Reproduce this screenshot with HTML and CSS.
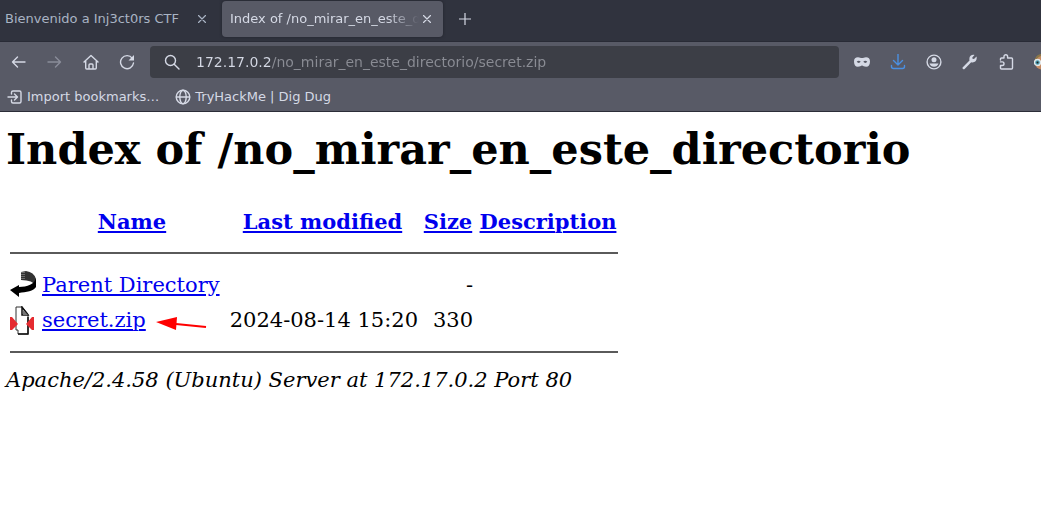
FILE: index.html
```html
<!DOCTYPE html>
<html lang="en">
<head>
<meta charset="utf-8">
<meta name="viewport" content="width=device-width, initial-scale=1">
<title>Index of /no_mirar_en_este_directorio</title>
<link rel="stylesheet" href="styles.css">
</head>
<body>
<header class="browser">
  <div class="tabs">
    <div class="tab">
      <button class="tab-title" type="button">Bienvenido a Inj3ct0rs CTF</button>
      <button class="tab-close" type="button" aria-label="Close tab"><svg width="8" height="8" viewBox="0 0 8 8"><path d="M.5.5l7 7M7.5.5l-7 7"/></svg></button>
    </div>
    <div class="tab tab-active">
      <button class="tab-title tab-fade" type="button">Index of /no_mirar_en_este_d</button>
      <button class="tab-close" type="button" aria-label="Close tab"><svg width="8" height="8" viewBox="0 0 8 8"><path d="M.5.5l7 7M7.5.5l-7 7"/></svg></button>
    </div>
    <button class="tab-new" type="button" aria-label="New tab"><svg width="12" height="12" viewBox="0 0 12 12"><path d="M6 0v12M0 6h12"/></svg></button>
  </div>
  <div class="toolbar">
    <div class="nav">
      <button class="tool" type="button" aria-label="Back"><svg width="16" height="16" viewBox="0 0 16 16"><path d="M14 8H1.500M6.500 3L1.500 8l5 5"/></svg></button>
      <button class="tool tool-off" type="button" aria-label="Forward" disabled><svg width="16" height="16" viewBox="0 0 16 16"><path d="M1 8h12.500M8.500 3L13.500 8l-5 5"/></svg></button>
      <button class="tool" type="button" aria-label="Home"><svg width="16" height="16" viewBox="0 0 16 16"><path d="M1 8l7-6.500L15 8M2.700 7v7q0 1 1 1h8.600q1 0 1-1V7M6 15v-4q0-1 1-1h2q1 0 1 1v4"/></svg></button>
      <button class="tool" type="button" aria-label="Reload"><svg width="16" height="16" viewBox="0 0 16 16"><path d="M13.300 4.300A6.500 6.500 0 1 0 14.500 9"/><path class="solid" d="M15 1v5.500H9.500z"/></svg></button>
    </div>
    <label class="url">
      <svg width="16" height="16" viewBox="0 0 16 16"><circle cx="6.500" cy="6.500" r="5"/><path d="M10.200 10.200L15 15"/></svg>
      <input class="url-text" type="text" aria-label="Address" value="172.17.0.2/no_mirar_en_este_directorio/secret.zip">
    </label>
    <div class="actions">
      <button class="tool" type="button" aria-label="Private mask"><svg width="16" height="16" viewBox="0 0 16 16"><path class="solid" fill-rule="evenodd" d="M0 7.500C0 4.500 1.500 3.200 4 3.200c2 0 2.500.8 4 .8s2-.8 4-.8c2.500 0 4 1.300 4 4.300 0 3.500-1.500 5.300-3.800 5.300C10 12.800 9 11.500 8 11.500s-2 1.300-4.200 1.300C1.500 12.800 0 11 0 7.500zM2.700 7.800c1 1.500 3 1.500 4 0-1-1.500-3-1.500-4 0zm6.600 0c1 1.500 3 1.500 4 0-1-1.500-3-1.500-4 0z"/></svg></button>
      <button class="tool tool-blue" type="button" aria-label="Downloads"><svg width="16" height="16" viewBox="0 0 16 16"><path d="M8 0v11M3.500 6.500L8 11l4.500-4.500M1.500 11.500v1q0 2 2 2h9q2 0 2-2v-1"/></svg></button>
      <button class="tool" type="button" aria-label="Account"><svg width="16" height="16" viewBox="0 0 16 16"><circle cx="8" cy="8" r="6.900"/><circle class="solid" cx="8" cy="5.700" r="2.500"/><path class="solid" d="M3.500 9.500h9c-.5 2-2.500 3.300-4.500 3.300s-4-1.300-4.500-3.300z"/></svg></button>
      <button class="tool" type="button" aria-label="Developer tools"><svg width="16" height="16" viewBox="0 0 16 16"><path class="solid" d="M14.500 2.500L12 5 10.500 4.800 10.300 3.500 12.500 1C10 .3 6.500 2 7.500 6.500L.8 13.200c-1 1 .8 2.800 1.800 1.800L9.200 8.300C13 9.300 15.500 6 14.500 2.500z"/></svg></button>
      <button class="tool" type="button" aria-label="Extensions"><svg width="16" height="16" viewBox="0 0 16 16"><path d="M2.500 6V5q0-1 1-1H6V2.500a1.800 1.800 0 0 1 3.600 0V4h3.900q1 0 1 1v9q0 1-1 1h-10q-1 0-1-1v-2.500h1.700a1.800 1.800 0 0 0 0-3.600H2.500"/></svg></button>
      <button class="tool" type="button" aria-label="Profile extension"><svg width="16" height="16" viewBox="0 0 16 16"><circle cx="8" cy="8" r="7.500" fill="#c58a62" stroke="none"/><path d="M2 5Q4 1 8 1" stroke="#8b7748" stroke-width="2"/><circle cx="3.500" cy="8.500" r="3" fill="#4b9eb2" stroke="#e4eaec"/><circle cx="3.500" cy="8.500" r="1" fill="#222" stroke="none"/></svg></button>
    </div>
  </div>
  <nav class="bookmarks" aria-label="Bookmarks">
    <a class="bookmark" href="#import"><svg width="16" height="16" viewBox="0 0 16 16"><path d="M4.500 5V3.500q0-1.500 1.500-1.500h6.500q1.500 0 1.500 1.500v9q0 1.500-1.500 1.500H6q-1.500 0-1.500-1.500V11M1 8h9M7.500 5L10.500 8l-3 3"/></svg><span>Import bookmarks…</span></a>
    <a class="bookmark" href="#thm"><svg width="16" height="16" viewBox="0 0 16 16"><circle cx="8" cy="8" r="6.800"/><ellipse cx="8" cy="8" rx="3.200" ry="6.800"/><path d="M1.500 8h13"/></svg><span>TryHackMe | Dig Dug</span></a>
  </nav>
</header>
<main class="page">
  <h1 class="title">Index of /no_mirar_en_este_directorio</h1>
  <table class="listing">
    <colgroup><col class="c-icon"><col class="c-name"><col class="c-date"><col class="c-size"><col class="c-desc"></colgroup>
    <tr class="row"><td></td><th><a href="#name">Name</a></th><th><a href="#modified">Last modified</a></th><th><a href="#size">Size</a></th><th><a href="#description">Description</a></th></tr>
    <tr><td colspan="5"><hr></td></tr>
    <tr class="row">
      <td><svg class="file-icon" width="27" height="29" viewBox="0 0 27 29"><path d="M11 1l5-1q8 1 10 8v7q-3-6-15-6z" fill="#333"/><path d="M12 1v7M14 1v7" stroke="#aaa" stroke-dasharray="1 1"/><path d="M26 7v9c-2 4-10 5-17 6v4L0 19l9-5v2c8 0 16-3 17-9z" fill="#000"/></svg></td>
      <td><a href="#parent">Parent Directory</a></td><td></td><td class="num">-</td><td></td>
    </tr>
    <tr class="row">
      <td><svg class="file-icon" width="27" height="29" viewBox="0 0 27 29"><path d="M6 1h6l6 7v20H8v-4H6z" fill="#fff" stroke="#333"/><path d="M12 1v8h6zM8 28h10V11" fill="none" stroke="#111" stroke-width="1.500"/><path d="M13 4l5 5h-5z" fill="#777"/><path d="M0 11h2l6 7-6 6H0zM24 11h-2l-6 7 6 6h2z" fill="#e52b30"/></svg></td>
      <td><a href="#secret">secret.zip</a><svg class="arrow" width="52" height="14" viewBox="0 0 52 14"><path d="M20 7l30 3" stroke="#f00" stroke-width="2"/><path d="M0 5L21 0l-1 13z" fill="#f00"/></svg></td><td class="num">2024-08-14 15:20</td><td class="num">330</td><td></td>
    </tr>
    <tr><td colspan="5"><hr></td></tr>
  </table>
  <address class="server">Apache/2.4.58 (Ubuntu) Server at 172.17.0.2 Port 80</address>
</main>
</body>
</html>
```
FILE: styles.css
```css
* { box-sizing: border-box; }
body {
  margin: 0;
  background: #fff;
  color: #000;
  font: 21px/25px "DejaVu Serif", serif;
  overflow-x: hidden;
}
.browser {
  overflow: hidden;
  background: #585a66;
  border-bottom: 1px solid #2b2d38;
  color: #d5d9e5;
  font: 13px/16px "DejaVu Sans", sans-serif;
}
.browser button {
  border: 0;
  padding: 0;
  background: none;
  color: inherit;
  font: inherit;
}
.browser svg {
  flex: none;
  display: block;
  fill: none;
  stroke: currentColor;
  stroke-width: 1.4;
  stroke-linecap: round;
  stroke-linejoin: round;
}
.browser .solid { fill: currentColor; stroke: none; }
.tabs {
  display: flex;
  height: 42px;
  padding: 1px 0 4px;
  background: #30333e;
  border-bottom: 1px solid #292b36;
}
.tab {
  display: flex;
  align-items: center;
  width: 217px;
  padding: 0 11px 0 5px;
  color: #a9b4c4;
}
.tab-active {
  width: 221px;
  margin-left: 5px;
  padding-left: 8px;
  padding-right: 12px;
  background: #585a66;
  border-radius: 4px;
  box-shadow: 0 0 3px #20222b;
  color: #d5d9e5;
}
.browser .tab-title {
  flex: 1;
  white-space: nowrap;
  text-align: left;
}
.tab-fade { mask-image: linear-gradient(to left, transparent 4px, #000 36px); }
.tabs svg { stroke-width: 1.2; }
.browser .tab-new { padding: 0 16px; }
.toolbar {
  display: flex;
  align-items: center;
  gap: 15px;
  padding: 4px 0;
}
.nav { display: flex; gap: 20px; padding-left: 11px; }
.tool-off { opacity: 0.4; }
.browser .tool-blue { color: #4a90e2; }
.url {
  flex: 1;
  min-width: 0;
  display: flex;
  align-items: center;
  gap: 16px;
  height: 32px;
  padding: 0 14px;
  background: #3c3e46;
  border-radius: 4px;
}
.url-text {
  flex: 1;
  min-width: 0;
  border: 0;
  padding: 0;
  outline: 0;
  font: 14px/20px "DejaVu Sans", sans-serif;
  color: transparent;
  background: linear-gradient(to right, #d5d9e5 75px, #8a8c94 75px);
  background-clip: text;
}
.actions { display: flex; gap: 20px; margin-right: -9px; }
.bookmarks { display: flex; gap: 16px; padding: 6px 7px; height: 29px; }
.bookmark {
  display: flex;
  align-items: center;
  gap: 4px;
  color: inherit;
  text-decoration: none;
  white-space: nowrap;
}
.page { padding: 12px 6px; }
.title {
  margin: 0 0 28px;
  font-size: 43px;
  line-height: 50px;
  white-space: nowrap;
}
a { color: #00e; }
.listing { table-layout: fixed; width: 616px; border-spacing: 3px; }
.listing td, .listing th { padding: 1px; white-space: nowrap; }
.row { height: 32px; }
.c-icon { width: 29px; }
.c-name { width: 182px; }
.c-date { width: 193px; }
.c-size { width: 52px; }
.c-desc { width: 142px; }
.file-icon { display: block; }
.arrow { margin-left: 10px; vertical-align: -4px; }
.num { text-align: right; }
hr { height: 2px; margin: 11px 0; border: 0; background: #5a5a5a; }
.server { white-space: nowrap; }
```
